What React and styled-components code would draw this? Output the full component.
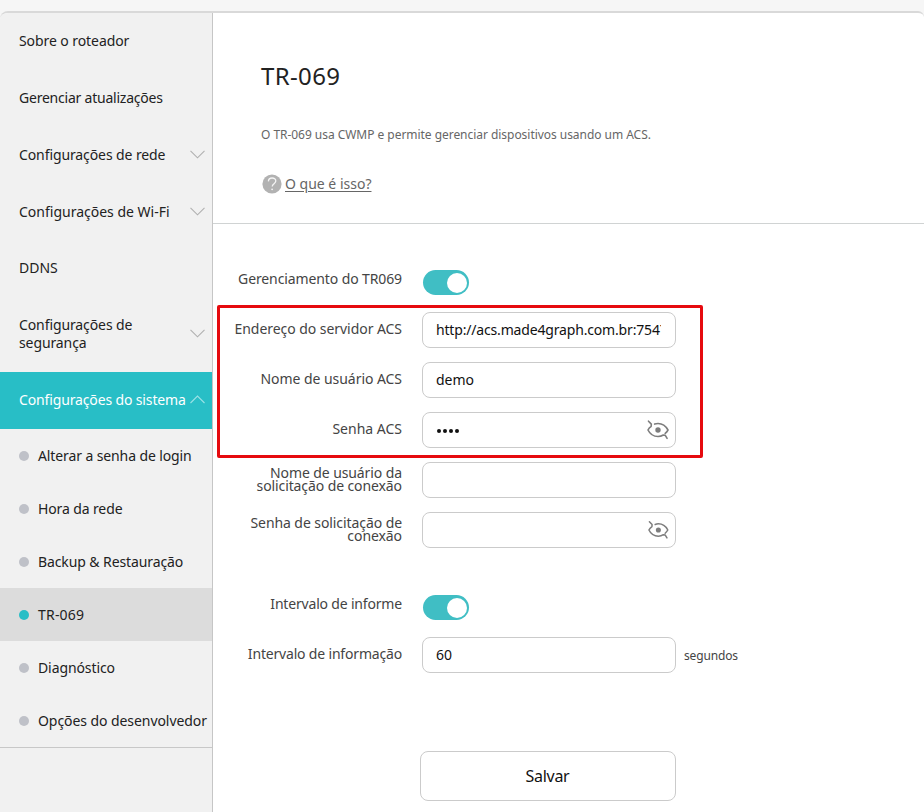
import React from "react";
import styled, { createGlobalStyle } from "styled-components";

const GlobalStyle = createGlobalStyle`
  *, *::before, *::after { box-sizing: border-box; }
  body {
    margin: 0;
    background: #f6f6f6;
    font-family: "Noto Sans", "Open Sans", sans-serif;
    font-size: 14px;
    color: #222;
    overflow: hidden;
  }
`;

const Page = styled.div`
  height: 812px;
  padding-top: 11px;
  overflow: hidden;
`;

const Shell = styled.div`
  display: flex;
  height: 801px;
  border-top: 2px solid #d9d9d9;
  border-radius: 8px 6px 0 0;
  background: #fff;
  overflow: hidden;
`;

const Sidebar = styled.nav`
  flex: none;
  width: 213px;
  background: #f1f1f1;
  border-right: 1px solid #c6c6c6;
`;

const MenuItem = styled.div`
  display: flex;
  align-items: center;
  justify-content: space-between;
  height: ${(p) => p.$height || 57}px;
  padding: 0 7px 2px 19px;
  line-height: 18px;
  color: ${(p) => (p.$active ? "#fff" : "#222")};
  background: ${(p) => (p.$active ? "#28bec6" : "transparent")};
`;

const Label = styled.span`
  letter-spacing: ${(p) => p.$track || 0}px;
  white-space: pre;
`;

const SubMenu = styled.div`
  border-bottom: 1px solid #c8c8c8;
`;

const SubItem = styled.div`
  display: flex;
  align-items: center;
  gap: 9px;
  height: 53px;
  padding-left: 19px;
  line-height: 20px;
  background: ${(p) => (p.$active ? "#dcdcdc" : "transparent")};
`;

const Dot = styled.i`
  flex: none;
  width: 10px;
  height: 10px;
  border-radius: 50%;
  background: ${(p) => (p.$active ? "#28bec6" : "#bfc1c8")};
`;

const Main = styled.main`
  position: relative;
  flex: 1;
  min-width: 0;
`;

const Header = styled.header`
  height: 211px;
  padding: 46px 48px 0;
  border-bottom: 1px solid #d0d3d3;
`;

const Title = styled.h1`
  margin: 0;
  font-size: 24px;
  font-weight: 400;
  line-height: 34px;
`;

const Description = styled.p`
  margin: 33px 0 0;
  font-size: 12px;
  line-height: 18px;
  color: #666;
`;

const Help = styled.div`
  display: flex;
  align-items: center;
  gap: 3px;
  margin: 30px 0 0 1px;
  line-height: 20px;
  color: #666;
`;

const HelpLink = styled.a`
  text-decoration: underline;
  text-underline-offset: 2px;
`;

const Form = styled.form`
  padding-top: 31px;
`;

const Row = styled.div`
  display: flex;
  height: 50px;
  margin-top: ${(p) => p.$gap || 0}px;
`;

const RowLabel = styled.label`
  width: 189px;
  margin-right: 20px;
  padding-top: ${(p) => (p.$double ? 11 : 17)}px;
  line-height: ${(p) => (p.$double ? 13 : 14)}px;
  text-align: right;
  color: #444;
`;

const Toggle = styled.span`
  display: flex;
  justify-content: flex-end;
  width: 46px;
  height: 25px;
  margin: 15px 0 0 1px;
  padding: 3px 2px 2px;
  border-radius: 12.5px;
  background: #40bec4;

  &::after {
    content: "";
    width: 20px;
    height: 20px;
    border-radius: 50%;
    background: #fff;
  }
`;

const Field = styled.div`
  display: flex;
  align-items: center;
  justify-content: space-between;
  width: 254px;
  height: 36px;
  margin-top: 7px;
  padding: 0 6px 0 13px;
  border: 1px solid #cbcbcb;
  border-radius: 8px;
  background: #fff;
  color: #111;
`;

const Value = styled.div`
  width: 225px;
  padding-bottom: 1px;
  overflow: hidden;
  white-space: nowrap;
`;

const Mask = styled.div`
  display: flex;
  gap: 2px;
  padding: 1px 0 0 1px;
`;

const MaskDot = styled.i`
  width: 4px;
  height: 4px;
  border-radius: 50%;
  background: #111;
`;

const Unit = styled.span`
  margin: 18px 0 0 8px;
  font-size: 12px;
  line-height: 16px;
  color: #444;
`;

const SaveButton = styled.button`
  display: block;
  width: 256px;
  height: 50px;
  margin: 71px 0 0 207px;
  padding: 0 1px 1px 0;
  border: 1px solid #cbcbcb;
  border-radius: 8px;
  background: #fff;
  font: inherit;
  font-size: 16px;
  letter-spacing: -0.3px;
  color: #111;
`;

const Highlight = styled.div`
  position: absolute;
  left: 4px;
  top: 292px;
  width: 486px;
  height: 153px;
  border: 3px solid #e60a0f;
  border-radius: 2px;
  pointer-events: none;
`;

const Chevron = ({ up }) => (
  <svg width="15" height="9" viewBox="0 0 15 9" fill="none" stroke={up ? "#9be2e6" : "#b0b0b0"} strokeWidth="1.1">
    <path d={up ? "M.5 8 7.5 1l7 7" : "M.5 .8 7.5 7.8l7-7"} />
  </svg>
);

const EyeOff = () => (
  <svg width="22" height="20" viewBox="0 0 22 20" fill="none" stroke="#7d7d7d" strokeWidth="1.6" strokeLinecap="round" strokeLinejoin="round">
    <path d="M1.500 1.200 4.300 4.100 4.200 6.300C2.700 7.300 1.600 8.600 1 10c2 4.200 5.700 6.500 10 6.500 1.900 0 3.700-.5 5.300-1.500M16.300 15l2 .4 1.800 3" />
    <path d="M7.600 4.100C8.700 3.700 9.800 3.500 11 3.500c4.300 0 7.900 2.600 10 6.500-.7 1.300-1.600 2.400-2.800 3.400" />
    <circle cx="11" cy="10" r="2.700" fill="#7d7d7d" stroke="none" />
  </svg>
);

const Question = () => (
  <svg width="20" height="20" viewBox="0 0 20 20" fill="none">
    <circle cx="10" cy="10" r="9.600" fill="#b2b2b2" />
    <path d="M6.400 7.400C6.500 5.200 7.900 4 10.100 4c2.200 0 3.700 1.200 3.700 3.100 0 2.500-3.500 2.700-3.600 5.300" stroke="#f4f4f4" strokeWidth="1.300" />
    <circle cx="10.100" cy="15.300" r=".9" fill="#f4f4f4" />
  </svg>
);

const menu = [
  { text: "Sobre o roteador", track: -0.08 },
  { text: "Gerenciar atualizações", track: -0.22 },
  { text: "Configurações de rede", arrow: true, track: -0.1 },
  { text: "Configurações de Wi-Fi", arrow: true },
  { text: "DDNS", height: 56 },
  { text: "Configurações de\nsegurança", arrow: true, height: 75, track: -0.1 },
  { text: "Configurações do sistema", arrow: true, active: true, track: -0.14 },
];

const subMenu = [
  { text: "Alterar a senha de login", track: -0.11 },
  { text: "Hora da rede", track: -0.12 },
  { text: "Backup & Restauração", track: -0.1 },
  { text: "TR-069", active: true, track: 0.2 },
  { text: "Diagnóstico", track: -0.1 },
  { text: "Opções do desenvolvedor", track: -0.07 },
];

const fields = [
  { label: "Gerenciamento do TR069", toggle: true, track: -0.11 },
  { label: "Endereço do servidor ACS", value: "http://acs.made4graph.com.br:7547", track: -0.05, valueTrack: -0.17 },
  { label: "Nome de usuário ACS", value: "demo", track: -0.05 },
  { label: "Senha ACS", mask: 4, eye: true },
  { label: "Nome de usuário da\nsolicitação de conexão", double: true, track: -0.1 },
  { label: "Senha de solicitação de\nconexão", double: true, eye: true, track: -0.08 },
  { label: "Intervalo de informe", toggle: true, gap: 25, track: -0.18 },
  { label: "Intervalo de informação", value: "60", unit: "segundos", track: -0.18 },
];

export default function App() {
  return (
    <Page>
      <GlobalStyle />
      <Shell>
        <Sidebar>
          {menu.map((m) => (
            <MenuItem key={m.text} $height={m.height} $active={m.active}>
              <Label $track={m.track}>{m.text}</Label>
              {m.arrow && <Chevron up={m.active} />}
            </MenuItem>
          ))}
          <SubMenu>
            {subMenu.map((s) => (
              <SubItem key={s.text} $active={s.active}>
                <Dot $active={s.active} />
                <Label $track={s.track}>{s.text}</Label>
              </SubItem>
            ))}
          </SubMenu>
        </Sidebar>
        <Main>
          <Header>
            <Title><Label $track={0.35}>TR-069</Label></Title>
            <Description><Label $track={-0.04}>O TR-069 usa CWMP e permite gerenciar dispositivos usando um ACS.</Label></Description>
            <Help>
              <Question />
              <HelpLink><Label>O que é isso?</Label></HelpLink>
            </Help>
          </Header>
          <Form>
            {fields.map((f) => (
              <Row key={f.label} $gap={f.gap}>
                <RowLabel $double={f.double}><Label $track={f.track}>{f.label}</Label></RowLabel>
                {f.toggle ? (
                  <Toggle />
                ) : (
                  <Field>
                    {f.mask ? (
                      <Mask>{Array.from({ length: f.mask }, (_, i) => <MaskDot key={i} />)}</Mask>
                    ) : (
                      <Value><Label $track={f.valueTrack}>{f.value}</Label></Value>
                    )}
                    {f.eye && <EyeOff />}
                  </Field>
                )}
                {f.unit && <Unit><Label $track={-0.15}>{f.unit}</Label></Unit>}
              </Row>
            ))}
            <SaveButton type="button">Salvar</SaveButton>
          </Form>
          <Highlight />
        </Main>
      </Shell>
    </Page>
  );
}
